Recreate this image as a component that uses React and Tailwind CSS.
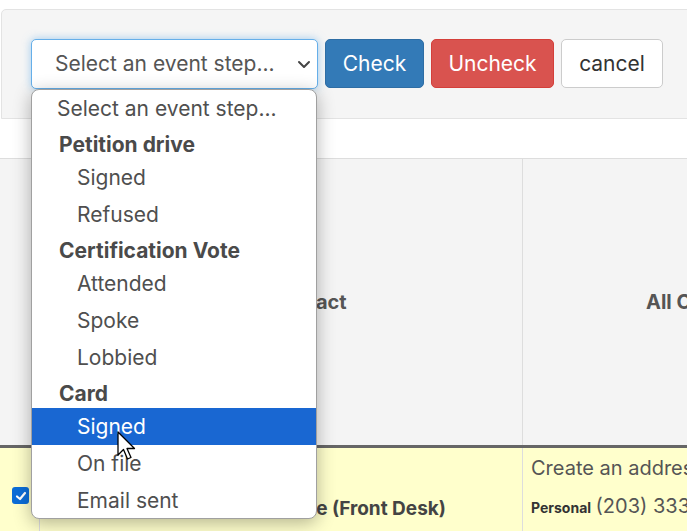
import React from "react";

const font = { fontFamily: "Inter, 'Noto Sans', sans-serif" };

function Chevron() {
  return (
    <svg width="14" height="9" viewBox="0 0 14 9" fill="none">
      <path d="M2 2 L7 7 L12 2" stroke="#444" strokeWidth="2" strokeLinecap="round" strokeLinejoin="round" />
    </svg>
  );
}

function Cursor() {
  return (
    <svg width="22" height="32" viewBox="0 0 22 32">
      <path
        d="M1 1 L1 24 L6.5 18.5 L10.5 28 L14 26.5 L10 17.5 L17.5 17.5 Z"
        fill="#fff"
        stroke="#000"
        strokeWidth="1.3"
        strokeLinejoin="round"
      />
    </svg>
  );
}

function Opt({ children, active }) {
  return (
    <div
      className={
        "h-[37px] flex items-center pl-[45px] text-[21px] whitespace-nowrap " +
        (active ? "bg-[#1967d2] text-white" : "text-[#4f4f4f]")
      }
    >
      {children}
    </div>
  );
}

function Group({ children }) {
  return (
    <div className="h-[32px] pt-[5px] leading-[26px] pl-[27px] text-[21px] font-bold text-[#4a4a4a] whitespace-nowrap">
      {children}
    </div>
  );
}

export default function App() {
  return (
    <div
      className="relative w-[687px] h-[531px] overflow-hidden bg-white"
      style={font}
    >
      {/* well panel */}
      <div className="mt-[9px] ml-[1px] w-[720px] h-[110px] rounded-tl-[5px] border border-[#e3e3e3] bg-[#f5f5f5] pt-[29px] pl-[29px] flex gap-[7px] items-start">
        <div className="w-[287px] h-[50px] rounded-[5px] border border-[#66afe9] bg-white shadow-[0_0_8px_rgba(102,175,233,0.6)] flex items-center justify-between pl-[23px] pr-[6px]">
          <span className="text-[21px] text-[#555] whitespace-nowrap">Select an event step...</span>
          <Chevron />
        </div>
        <button className="w-[99px] h-[49px] rounded-[5px] bg-[#337ab7] border border-[#2e6da4] text-white text-[21px]">
          Check
        </button>
        <button className="w-[123px] h-[49px] rounded-[5px] bg-[#d9534f] border border-[#d43f3a] text-white text-[21px]">
          Uncheck
        </button>
        <button className="w-[102px] h-[49px] rounded-[5px] bg-white border border-[#ccc] text-[#333] text-[21px]">
          cancel
        </button>
      </div>

      {/* table */}
      <div className="mt-[39px] w-[860px] border-t border-[#ddd]">
        <div className="flex h-[286px] bg-[#f4f4f4]">
          <div className="w-[40px] border-r border-[#ddd]" />
          <div className="w-[482px] flex items-center pl-[229px] text-[20px] font-bold text-[#555] whitespace-nowrap">
            Contact
          </div>
          <div className="flex-1 border-l border-[#ddd] flex items-center pl-[123px] text-[20px] font-bold text-[#555] whitespace-nowrap">
            All Contact info
          </div>
        </div>
        <div className="h-[3px] bg-[#666]" />
        <div className="flex h-[90px] bg-[#ffffcc]">
          <div className="w-[40px] border-r border-[#ddd] pt-[39px] pl-[12px]">
            <div className="w-[17px] h-[17px] rounded-[3px] bg-[#0b6dd8] flex items-center justify-center">
              <svg width="12" height="12" viewBox="0 0 12 12">
                <path d="M2 6.5 L5 9 L10 3" stroke="#fff" strokeWidth="2.2" fill="none" strokeLinecap="round" strokeLinejoin="round" />
              </svg>
            </div>
          </div>
          <div className="w-[482px] flex items-start justify-end pr-[76px] pt-[47px] text-[19px] leading-[28px] font-bold text-[#444] whitespace-nowrap">
            Main Office (Front Desk)
          </div>
          <div className="flex-1 border-l border-[#ddd] pl-[8px] pt-[6px] text-[#555] whitespace-nowrap">
            <div className="text-[20px] leading-[28px]">Create an address</div>
            <div className="mt-[10px] leading-[28px]">
              <span className="text-[14px] font-bold text-[#333]">Personal</span>{" "}
              <span className="text-[20px]">(203) 333-4444</span>
            </div>
          </div>
        </div>
      </div>

      {/* dropdown list */}
      <div className="absolute left-[31px] top-[89px] w-[286px] h-[430px] rounded-[8px] border border-[#a0a0a0] bg-white shadow-[0_4px_18px_rgba(0,0,0,0.3)] overflow-hidden">
        <div className="h-[37px] flex items-center pl-[25px] text-[21px] text-[#4f4f4f] whitespace-nowrap">
          Select an event step...
        </div>
        <Group>Petition drive</Group>
        <Opt>Signed</Opt>
        <Opt>Refused</Opt>
        <Group>Certification Vote</Group>
        <Opt>Attended</Opt>
        <Opt>Spoke</Opt>
        <Opt>Lobbied</Opt>
        <Group>Card</Group>
        <Opt active>Signed</Opt>
        <Opt>On file</Opt>
        <Opt>Email sent</Opt>
      </div>

      <div className="absolute left-[117px] top-[431px]">
        <Cursor />
      </div>
    </div>
  );
}
